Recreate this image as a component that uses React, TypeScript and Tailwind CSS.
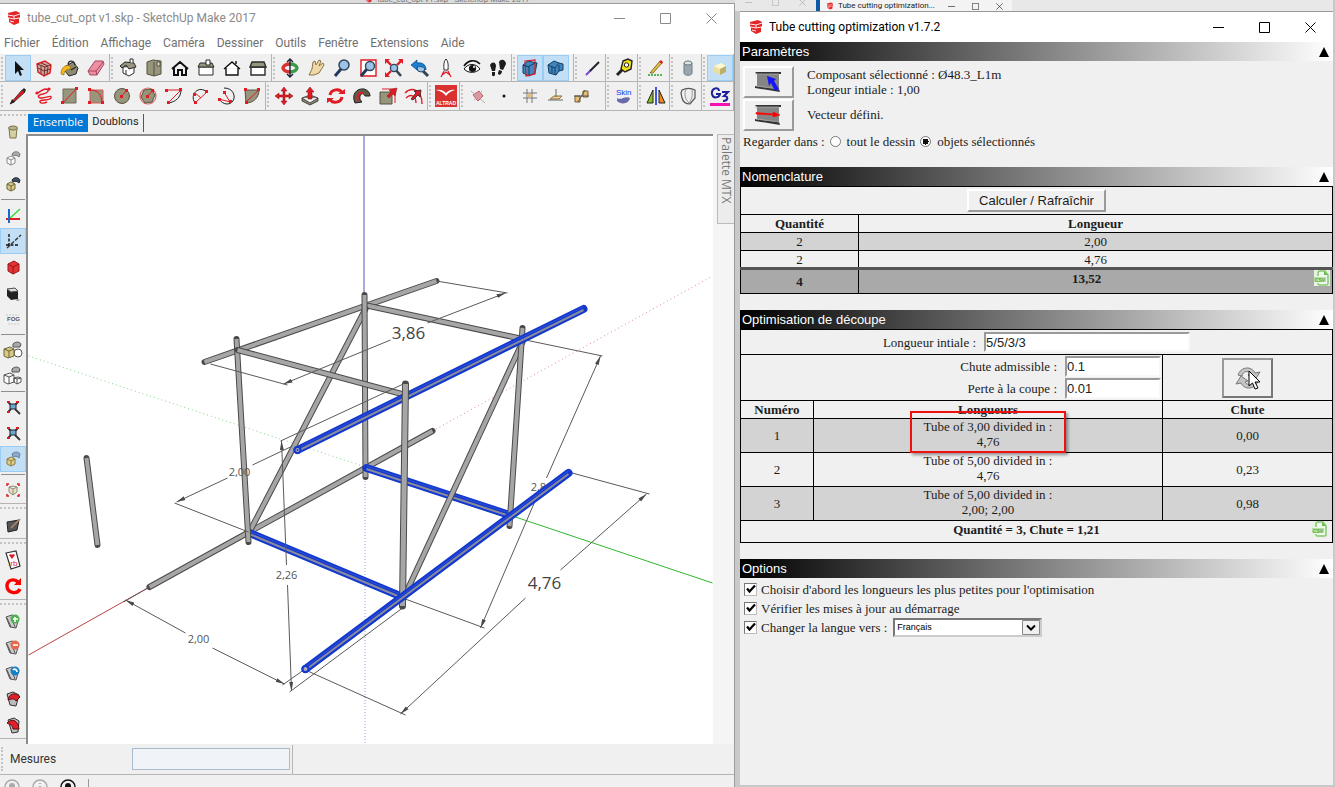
import { useState } from "react";
import type { ReactNode } from "react";

const red = "#e01b24";
const stone = "#97957c";
const dark = "#2b2b2b";

// Every toolbar drawing lives on a 20x20 grid
const icons: Record<string, ReactNode> = {
  select: <path d="M7 3v13l3-3 2 5 2-1-2-5h4z" fill="#111" />,
  component: (
    <>
      <path d="M3 6l8-3 6 4-1 8-6 3-6-4z" fill="#c9a9a0" stroke={red} strokeWidth="1.4" />
      <path d="M3 6l8 3 6-2M11 9l-1 9M7 5l7 3M4 10l6 3 6-2M7 8v8M14 9l-1 7" fill="none" stroke="#7a2a28" strokeWidth="1" />
    </>
  ),
  paint: (
    <>
      <path d="M6 8l7-4 5 6-2 6-7 2-4-5z" fill="#8c8a72" stroke={dark} />
      <path d="M8 6c1-4 6-4 7 1M11 12l5-3" fill="none" stroke={dark} strokeWidth="1.3" />
      <path d="M10 8C5 6 1 10 1 16l3 1c0-4 3-6 7-6z" fill="#f5b81f" stroke="#8a6100" strokeWidth=".6" />
    </>
  ),
  eraser: (
    <>
      <path d="M2 13L9 3h8l1 3-7 11H4z" fill="#ef8fa2" stroke="#a34a5c" />
      <path d="M2 13h8l7-9M10 13l1 4" fill="none" stroke="#a34a5c" />
    </>
  ),
  iso: (
    <>
      <path d="M5 9v6l6 3 5-3V8z" fill="#fff" stroke={dark} />
      <path d="M2 8l5-4 9 1 2 4-7 2-3-4-4 3z" fill={stone} stroke={dark} />
      <path d="M12 4V1h3v4M8 12v4" stroke={dark} fill="#fff" />
    </>
  ),
  top: (
    <>
      <path d="M3 4l6-2 8 1v13l-7 2-7-2z" fill={stone} stroke="#55533f" />
      <path d="M10 4v14M13 4h3v4h-3z" fill="#ddd" stroke="#55533f" />
    </>
  ),
  front: <path d="M2 11l8-7 8 7M4 10v7h4v-5h4v5h4v-7" fill="none" stroke="#111" strokeWidth="2" />,
  right: (
    <>
      <path d="M3 9h14v8H3z" fill="#fff" stroke={dark} />
      <path d="M2 9l2-4h12l2 4z" fill={stone} stroke={dark} />
      <path d="M10 2h4v5h-4z" fill="#fff" stroke={dark} />
    </>
  ),
  back: <path d="M2 11l8-7 8 7M4 10v7h12v-7M14 6V3" fill="#fff" stroke="#111" strokeWidth="1.4" />,
  left: (
    <>
      <path d="M3 9h14v8H3z" fill="#fff" stroke={dark} strokeWidth="1.4" />
      <path d="M2 9l2-5h12l2 5z" fill={stone} stroke={dark} strokeWidth="1.4" />
    </>
  ),
  orbit: (
    <>
      <path d="M10 6c4 0 7 2 7 4s-3 4-7 4" fill="none" stroke="#3b9a4a" strokeWidth="3.4" />
      <path d="M10 14c-4 0-7-2-7-4s3-4 7-4" fill="none" stroke="#d63434" strokeWidth="3.4" />
      <path d="M10 2v16M7 4l3-3 3 3M7 16l3 3 3-3" stroke="#223" fill="none" strokeWidth="1.4" />
    </>
  ),
  pan: <path d="M3 17l3-6 1-7 2-1 1 4 3-5 2 1-2 5 4-3 1 2-5 8-5 2z" fill="#efd9a8" stroke="#8b7445" />,
  zoom: (
    <>
      <path d="M3 18l6-7" stroke="#23395d" strokeWidth="3" />
      <circle cx="12" cy="7" r="5" fill="#9cc4ea" stroke="#345" strokeWidth="1.5" />
    </>
  ),
  zoomWindow: (
    <>
      <path d="M3 2h15v16H3z" fill="#fff" stroke={red} strokeWidth="1.4" />
      <path d="M3 18l6-7" stroke="#23395d" strokeWidth="3" />
      <circle cx="12" cy="8" r="4.5" fill="#9cc4ea" stroke="#345" strokeWidth="1.4" />
    </>
  ),
  extents: (
    <>
      <path d="M11 11l6 7" stroke="#345" strokeWidth="2.6" />
      <path d="M2 2l5 5M18 2l-5 5M2 18l5-5" stroke={red} strokeWidth="2.4" />
      <path d="M1 1h5L1 6zM19 1h-5l5 5zM1 19h5l-5-5z" fill={red} />
      <circle cx="10" cy="10" r="3.6" fill="#9cc4ea" stroke="#345" strokeWidth="1.3" />
    </>
  ),
  previous: (
    <>
      <path d="M12 12l6 6" stroke="#345" strokeWidth="3" />
      <circle cx="11" cy="10" r="4" fill="#9cc4ea" stroke="#345" />
      <path d="M1 7l6-5v3c6-1 9 2 9 7-2-3-5-4-9-3v3z" fill="#1e7fd0" stroke="#0d4c86" strokeWidth=".7" />
    </>
  ),
  camera: (
    <>
      <path d="M10 1c3 3 2 9 2 11H8c0-2-1-8 2-11z" fill="#fff" stroke={dark} />
      <path d="M8 13l-3 6M12 13l3 6M6 17l4-3 4 3" stroke={red} fill="none" strokeWidth="1.2" />
    </>
  ),
  eye: (
    <>
      <path d="M2 11c4-6 12-6 16 0-4 4-11 5-16 0z" fill="#fff" stroke="#111" />
      <path d="M2 8c4-6 11-7 16-2" fill="none" stroke="#111" strokeWidth="1.6" />
      <circle cx="10.500" cy="10.500" r="3.600" fill="#111" />
      <circle cx="12" cy="9" r="1" fill="#fff" />
    </>
  ),
  walk: (
    <path d="M2 7c2-4 6-3 6 1l-1 5H4zM4 14h3v3c-1 2-3 1-3 0zM11 4c2-4 7-2 7 2l-3 6-3-1zM11 12l3 1c0 4-4 5-4 2z" fill="#1c1c1c" />
  ),
  xray: (
    <>
      <path d="M3 7l5-4 9 2-2 10-6 3-6-3z" fill="#3f86bf" stroke="#163d63" />
      <path d="M5 3l10-1v14l-9 2z" fill="none" stroke={red} strokeWidth="1.2" />
      <path d="M8 9l7-4M9 17V9L3 7" stroke="#163d63" fill="none" />
    </>
  ),
  backEdges: (
    <>
      <path d="M2 7l6-4 5 2 4 1v6l-4 1-3 4-7-2z" fill="#3f86bf" stroke="#163d63" />
      <path d="M2 7l7 3v7M9 10l4-5M13 7v6M6 9v6" stroke="#163d63" fill="none" />
    </>
  ),
  edge: (
    <>
      <path d="M4 17l5-5" stroke="#7b45d8" strokeWidth="2" />
      <path d="M8 13l9-9" stroke="#26222e" strokeWidth="2" />
    </>
  ),
  tape: (
    <>
      <path d="M9 11l-6 6" stroke="#222" strokeWidth="3" />
      <path d="M9 3l5-2 4 2-1 8-6 3-4-3z" fill="#f4e11c" stroke="#222" strokeWidth="1.4" />
      <circle cx="12.500" cy="7" r="2.200" fill="#fff" stroke="#222" />
    </>
  ),
  pencilYellow: (
    <>
      <path d="M4 15L14 3l2 2L7 15z" fill="#e6bd3e" stroke="#725614" strokeWidth=".8" />
      <path d="M13 4l2-2 2 2-1 2z" fill={red} />
      <path d="M2 17h14" stroke="#27a127" strokeWidth="1.6" strokeDasharray="2 1" />
    </>
  ),
  cylinder: (
    <>
      <path d="M6 5v10c0 3 8 3 8 0V5z" fill="#9aa6ad" stroke="#6d7a80" />
      <ellipse cx="10" cy="5" rx="4" ry="2" fill="#dbe3e8" stroke="#6d7a80" />
    </>
  ),
  softBox: (
    <>
      <path d="M4 8l7-3 5 3-6 3z" fill="#fff8cf" />
      <path d="M4 8l6 3v6l-6-3z" fill="#eadf9f" />
      <path d="M10 11l6-3v6l-6 3z" fill="#bfae67" />
    </>
  ),
  pencil: (
    <>
      <path d="M2 18L14 4l3 2L6 16z" fill={red} stroke="#222" strokeWidth=".8" />
      <path d="M2 18l2-5 3 3zM14 4l2-2 2 2-1 2z" fill="#222" />
    </>
  ),
  freehand: (
    <>
      <path d="M3 7c4-1 5-4 9-4 4 1 2 4-3 5-6 1-6 4-1 4 6-1 10-3 9 0s-12 1-11 4c1 2 5 1 7 0" fill="none" stroke={red} strokeWidth="1.4" />
      <circle cx="3" cy="7" r="1.600" fill={red} />
      <circle cx="15" cy="3" r="1.600" fill={red} />
    </>
  ),
  rect: (
    <>
      <path d="M3 3h13v14H3z" fill={stone} stroke="#6d6b55" />
      <path d="M3 17L16 3" stroke={red} />
      <path d="M1 15h3v3H1zM15 1h3v3h-3z" fill={red} />
    </>
  ),
  rotRect: (
    <>
      <path d="M4 4h13v13H4z" fill={stone} stroke="#d85a5a" />
      <path d="M4 4c8 0 12 5 12 13" fill="none" stroke={red} />
      <path d="M2 2h3v3H2zM2 15h3v3H2zM15 15h3v3h-3z" fill={red} />
    </>
  ),
  circle: (
    <>
      <circle cx="10" cy="10" r="7.500" fill={stone} stroke="#55533f" />
      <path d="M10 10l4-5" stroke={red} />
      <path d="M8 9h3v3H8zM13 3h3v3h-3z" fill={red} />
    </>
  ),
  polygon: (
    <>
      <circle cx="10" cy="10" r="8" fill="none" stroke="#d66" strokeWidth="1.2" />
      <path d="M6 4l7-1 4 6-3 7-7 1-4-6z" fill={stone} stroke="#55533f" />
      <path d="M10 10l4-5" stroke={red} />
      <path d="M8 9h3v3H8zM13 3h3v3h-3z" fill={red} />
    </>
  ),
  arc: (
    <>
      <path d="M2 4h15L4 17" fill="none" stroke={red} />
      <path d="M17 4c0 7-5 12-13 13" fill="none" stroke="#222" />
      <path d="M1 3h3v3H1zM15 2h3v3h-3zM3 15h3v3H3z" fill={red} />
    </>
  ),
  arc2: (
    <>
      <path d="M17 6L5 17M5 7l6 5" fill="none" stroke={red} />
      <path d="M5 17C-1 8 9-1 17 6" fill="none" stroke="#222" />
      <path d="M3 7h3v3H3zM15 4h3v3h-3zM4 15h3v3H4z" fill={red} />
    </>
  ),
  arc3: (
    <>
      <path d="M8 2c13 0 13 16 3 16-3 0-6-2-8-5" fill="none" stroke="#222" />
      <path d="M3 13l11 3L8 6" fill="none" stroke={red} />
      <path d="M2 12h3v3H2zM7 5h3v3H7zM13 14h3v3h-3z" fill={red} />
    </>
  ),
  pie: (
    <>
      <path d="M3 4h14c0 7-5 13-13 13z" fill={stone} stroke="#55533f" />
      <path d="M4 16L17 4" stroke={red} />
      <path d="M2 2h3v3H2zM15 2h3v3h-3zM3 15h3v3H3z" fill={red} />
    </>
  ),
  move: <path d="M10 1l3 4h-2v4h4V7l4 3-4 3v-2h-4v4h2l-3 4-3-4h2v-4H5v2l-4-3 4-3v2h4V5H7z" fill={red} stroke="#7d1015" strokeWidth=".5" />,
  pushpull: (
    <>
      <path d="M2 12l8-3 8 3-8 5zM2 12v3l8 4 8-4v-3" fill="#8a8870" stroke={dark} strokeWidth=".8" />
      <path d="M8 13V6H6l4-5 4 5h-2v7z" fill={red} stroke="#7d1015" strokeWidth=".5" />
    </>
  ),
  rotate: (
    <>
      <path d="M4 9c1-6 10-7 12-2" fill="none" stroke={red} strokeWidth="3" />
      <path d="M16 11c-1 6-10 7-12 2" fill="none" stroke={red} strokeWidth="3" />
      <path d="M12 8h7V3zM8 12H1v5z" fill={red} />
    </>
  ),
  follow: (
    <>
      <path d="M3 17C-1 8 5 2 12 3c4 1 6 4 6 7h-5c-1-3-4-3-5 0-1 3 1 5 2 6z" fill="#5e5c4b" stroke="#1f1f1f" />
      <path d="M6 15c-2-6 1-9 6-8" fill="none" stroke={red} strokeWidth="2" />
    </>
  ),
  scale: (
    <>
      <path d="M4 3h13v14" fill="none" stroke={red} />
      <path d="M2 6h12v12H2z" fill={stone} stroke="#55533f" />
      <path d="M9 10l4-4-2-2 8-2-2 8-2-2-4 4z" fill={red} stroke="#7d1015" strokeWidth=".5" />
    </>
  ),
  offset: (
    <>
      <path d="M1 7c7-7 17-3 17 11M2 12c5-5 10-2 10 5" fill="none" stroke={red} strokeWidth="1.4" />
      <path d="M7 13l5-6-2-2 7-1-1 7-2-2-5 5z" fill={red} stroke="#222" strokeWidth=".8" />
    </>
  ),
  softEraser: (
    <>
      <path d="M5 9l6-4 4 5-5 5z" fill="#e9919d" stroke="#b26570" />
      <path d="M3 5l14 12M14 5L6 14" stroke="#b8a9aa" />
    </>
  ),
  dot: <circle cx="10" cy="10" r="1.500" fill="#111" />,
  grid: (
    <>
      <path d="M3 7h14M3 12h14M7 3v14M12 3v14" stroke="#777" />
      <path d="M7 8h5v3H7z" fill="#e8bd72" />
    </>
  ),
  plane: (
    <>
      <path d="M4 13l4-3h8l-3 3z" fill="#f1cf92" stroke="#8d7443" />
      <path d="M10 3v8M2 14h15" stroke="#666" />
    </>
  ),
  joints: (
    <>
      <path d="M3 10h5v6H3zM11 5h5v6h-5z" fill="#e8bd72" stroke="#776035" />
      <path d="M2 10h15M6 16l7-12" stroke="#555" fill="none" />
    </>
  ),
  skin: (
    <>
      <path d="M3 12c4 3 8-3 13 0-1 6-9 7-13 3z" fill="#686aa9" />
      <text x="2" y="9" fontSize="8" fill="#1633e8" fontFamily="Liberation Sans, sans-serif">Skin</text>
    </>
  ),
  mirror: (
    <>
      <path d="M7 4v13H1z" fill="#8cc21d" stroke="#222" />
      <path d="M13 4v13h6z" fill="#f08a1c" stroke="#222" />
      <path d="M10 1v18" stroke="#1731e8" strokeWidth="1.6" />
    </>
  ),
  shield: (
    <>
      <path d="M4 4c4-2 9-2 13 0v8l-5 6c-4 0-7-2-8-6l-1-5z" fill="#eee" stroke="#555" strokeWidth="1.2" />
      <path d="M8 3c-2 5-1 10 3 14M14 4c1 6-1 11-3 13" fill="none" stroke="#999" />
    </>
  ),
  cz: (
    <>
      <path d="M9 5C9 0 1 2 2 8c1 5 7 4 8 0H6M12 6h6l-4 4c5 0 4 5-1 5" fill="none" stroke="#1c2199" strokeWidth="2" />
      <path d="M0 17h20v3H0z" fill="#f312b4" />
    </>
  ),
  bin: (
    <>
      <path d="M6 6l1 10h6l1-10z" fill="#d6d0a0" stroke="#77734e" />
      <ellipse cx="10" cy="6" rx="4.500" ry="2" fill="#b9b486" stroke="#77734e" />
    </>
  ),
  cubeWire: (
    <>
      <path d="M4 10l4-2 4 2v5l-4 2-4-2zM4 10l4 2 4-2M8 12v5" fill="#fff" stroke="#888" />
      <path d="M9 6c3-4 7-2 8 0l-1 3c-2-2-4-2-6-1z" fill="#aaa" stroke="#777" />
    </>
  ),
  cubeSolid: (
    <>
      <path d="M4 10l4-2 4 2v5l-4 2-4-2z" fill="#d8ca85" stroke="#6c643d" />
      <path d="M4 10l4 2 4-2M8 12v5" fill="none" stroke="#6c643d" />
      <path d="M9 6c3-4 7-2 8 0l-1 3c-2-2-4-2-6-1z" fill="#3d4e66" stroke="#222" />
    </>
  ),
  cubeGlass: (
    <>
      <path d="M4 10l4-2 4 2v5l-4 2-4-2z" fill="#e0cd83" stroke="#8b7d49" />
      <path d="M4 10l4 2 4-2M8 12v5" fill="none" stroke="#8b7d49" />
      <path d="M9 5c3-3 7-2 8 0l-1 4c-2-2-4-2-6-1z" fill="#8fa9cb" stroke="#69809f" />
    </>
  ),
  axes: (
    <>
      <path d="M6 14L17 4" stroke="#38e038" strokeWidth="1.6" />
      <path d="M3 14h14" stroke={red} strokeWidth="2" />
      <path d="M6 4v14" stroke="#1b67d0" strokeWidth="2" />
    </>
  ),
  guides: (
    <>
      <path d="M6 3v13M3 14h13" stroke="#111" strokeWidth="1.4" strokeDasharray="3 1.500" />
      <path d="M4 17L18 4" stroke="#333" strokeWidth="1.4" strokeDasharray="4 1.500" />
    </>
  ),
  redBox: (
    <>
      <path d="M5 7l6-3 5 3v7l-6 3-5-3z" fill="#ea3232" stroke="#8d1b1b" />
      <path d="M5 7l5 3 6-3M10 10v7" fill="none" stroke="#8d1b1b" />
    </>
  ),
  blackBox: (
    <>
      <path d="M4 6l8-1 3 3v8l-7 1-4-4z" fill="#222" />
      <path d="M4 6l8-1 3 3-7 1z" fill="#ddd" stroke="#555" />
      <path d="M14 16l4 1-5 1z" fill="#888" />
    </>
  ),
  fog: (
    <>
      <path d="M3 6h13M5 15h12" stroke="#ddd" strokeWidth="2" strokeDasharray="2 1" />
      <text x="4" y="12" fontSize="6" fontWeight="bold" fill="#555" fontFamily="Liberation Sans, sans-serif">FOG</text>
    </>
  ),
  ghostSolid: (
    <>
      <path d="M10 4c3-3 7-2 8 0l-1 3H10z" fill="#aaa" stroke="#555" />
      <circle cx="15" cy="13" r="4" fill="#fff" stroke="#555" />
      <path d="M1 9l6-2 4 2v7l-6 2-4-2z" fill="#d8ca85" stroke="#6c643d" />
      <path d="M1 9l5 2 5-2M6 11v7" fill="none" stroke="#6c643d" />
    </>
  ),
  ghostWire: (
    <>
      <path d="M9 3c3-3 7-2 8 0l-1 3H9z" fill="#aaa" stroke="#555" />
      <path d="M1 9l6-2 4 2v7l-6 2-4-2zM1 9l5 2 5-2M6 11v7M11 12l4-1 3 1v4l-4 2-3-2zM11 12l3 1 4-1M14 13v5" fill="#fff" stroke="#555" />
    </>
  ),
  focus: (
    <>
      <path d="M5 5l3 3M15 5l-3 3M5 15l3-3M12 12l5 5" stroke="#333" strokeWidth="1.8" />
      <path d="M4 4h3v2H4zM13 4h3v2h-3zM4 14h3v2H4z" fill={red} />
      <path d="M7 7h6v5H7z" fill="#6fa6cc" stroke="#223" />
    </>
  ),
  bounds: (
    <>
      <path d="M4 6V4h2M14 4h2v2M4 14v2h2M16 14v2h-2" fill="none" stroke={red} strokeWidth="1.5" />
      <path d="M6 7l4-1 4 1v5l-4 3-4-3zM6 7l4 2 4-2M10 9v6" fill="#e9e2c8" stroke="#8f8a74" />
    </>
  ),
  board: (
    <>
      <path d="M4 7l12-2-2 10-9 2z" fill="#555" stroke="#222" />
      <path d="M8 13l9-9" stroke="#b08a68" strokeWidth="1.6" />
    </>
  ),
  ruby: (
    <>
      <path d="M3 3l10-2 4 15-9 3z" fill="#fff" stroke="#333" strokeWidth="1.2" />
      <path d="M6 5l2-1 1 1 1-1 2 1-3 4z" fill={red} />
      <text x="5" y="16" fontSize="8" fill={red} fontFamily="Liberation Sans, sans-serif">.rb</text>
    </>
  ),
  reload: (
    <>
      <path d="M17 13c-3 6-13 4-13-3 0-6 7-8 11-4" fill="none" stroke="#f00" strokeWidth="3.400" />
      <path d="M18 2v7h-7z" fill="#f00" />
    </>
  ),
};

function badge(fill: string, mark: string) {
  return (
    <>
      <path d="M3 6l6-2 7 3-3 10-6-1z" fill="#ccc" stroke="#555" />
      <path d="M4 7l4 9M8 6l4 10" stroke="#555" />
      <circle cx="12" cy="8" r="4.500" fill={fill} />
      <path d={mark} stroke="#fff" strokeWidth="1.600" fill="none" />
    </>
  );
}

icons.tagAdd = badge("#4fb054", "M10 8h5M12 6v5");
icons.tagRemove = badge("#e5684f", "M10 8h5");
icons.tagSync = badge("#1781c4", "M10 7c2-2 4 0 4 2");
icons.tagUp = (
  <>
    <path d="M4 5l6-2 6 3-3 11-6-1z" fill="#bbb" stroke="#333" />
    <path d="M5 11c1-7 8-8 12-3l-4 4c-2-3-4-2-8-1z" fill="#e0202a" stroke="#5a0d10" />
  </>
);
icons.tagDown = (
  <>
    <path d="M5 5l6-2 5 3-1 11-6 1z" fill="#bbb" stroke="#333" />
    <path d="M4 8c5-5 11-3 12 6h-6c0-3-2-4-6-6z" fill="#e0202a" stroke="#5a0d10" />
  </>
);

function Icon({ name, className = "size-5" }: { name: string; className?: string }) {
  return (
    <svg viewBox="0 0 20 20" className={className} aria-hidden="true">
      {icons[name]}
    </svg>
  );
}

function Logo({ className = "size-4" }: { className?: string }) {
  return (
    <svg viewBox="0 0 16 16" className={className} aria-hidden="true">
      <path d="M2 3l8-2 4 2v4l-1 1v5l-5 2-5-3v-4L2 7z" fill="#e42527" />
      <path d="M2 5l6 1 6-2M8 6v3L3 8M8 9l5-1M4 11l4 1" fill="none" stroke="#fff" strokeWidth=".9" />
    </svg>
  );
}

function WindowButtons({ className, glyph = "size-[11px]" }: { className: string; glyph?: string }) {
  return (
    <div className={`flex items-center ${className}`}>
      <button type="button" aria-label="Réduire" className="flex flex-1 justify-center">
        <svg viewBox="0 0 11 11" className={glyph}><path d="M0 5.500h11" stroke="currentColor" /></svg>
      </button>
      <button type="button" aria-label="Agrandir" className="flex flex-1 justify-center">
        <svg viewBox="0 0 11 11" className={glyph}><path d="M.5.5h10v10H.5z" fill="none" stroke="currentColor" /></svg>
      </button>
      <button type="button" aria-label="Fermer" className="flex flex-1 justify-center">
        <svg viewBox="0 0 11 11" className={glyph}><path d="M.5.5l10 10M10.500.5l-10 10" stroke="currentColor" /></svg>
      </button>
    </div>
  );
}

interface ToolGroupProps {
  items: string[];
  active?: string[];
  grow?: boolean;
}

function ToolGroup({ items, active = [], grow }: ToolGroupProps) {
  return (
    <div className={`flex items-center border-r border-[#b5b5b5] ${grow ? "flex-1" : "shrink-0"}`}>
      <div className="mx-px h-[22px] w-[3px] border-l-2 border-dotted border-[#c4c4c4]" />
      {items.map((name) => (
        <button
          key={name}
          type="button"
          aria-label={name}
          className={
            active.includes(name)
              ? "flex h-[26px] w-[26px] shrink-0 items-center justify-center border border-[#99cdf5] bg-[#c2dff5]"
              : "flex h-[26px] w-[26px] shrink-0 items-center justify-center"
          }
        >
          {name === "altrad" ? (
            <svg viewBox="0 0 22 22" className="size-[22px]" aria-hidden="true">
              <path d="M0 0h22v22H0z" fill="#d93030" />
              <path d="M1 5c5-1 8 1 10 3 2-2 5-4 9-3-4 1-7 3-9 6-2-3-5-5-10-6z" fill="#fff" />
              <text x="11" y="20" fontSize="5" textAnchor="middle" fontWeight="bold" fill="#fff" fontFamily="Liberation Sans, sans-serif">ALTRAD</text>
            </svg>
          ) : (
            <Icon name={name} />
          )}
        </button>
      ))}
    </div>
  );
}

function SideTools({ items, active }: { items: string[]; active?: string }) {
  return (
    <>
      {items.map((name, i) => (
        <button
          key={i}
          type="button"
          aria-label={name}
          className={
            name === active
              ? "flex h-[26px] w-full shrink-0 items-center justify-center border border-[#99cdf5] bg-[#c2dff5]"
              : "flex h-[26px] w-full shrink-0 items-center justify-center"
          }
        >
          <Icon name={name} />
        </button>
      ))}
    </>
  );
}

const SideGrip = () => (
  <div className="flex h-2 shrink-0 items-center">
    <div className="w-full border-t-2 border-dotted border-[#c4c4c4]" />
  </div>
);
const SideLine = () => (
  <div className="flex h-[5px] shrink-0 items-center px-px">
    <div className="w-full border-t border-[#8f8f8f]" />
  </div>
);

type Line = [number, number, number, number];

function Tube({ l, w = 6 }: { l: Line; w?: number }) {
  const [x1, y1, x2, y2] = l;
  return (
    <g>
      <line x1={x1} y1={y1} x2={x2} y2={y2} stroke="#4a4a4a" strokeWidth={w} strokeLinecap="round" />
      <line x1={x1} y1={y1} x2={x2} y2={y2} stroke="#a6a6a6" strokeWidth={w - 2} />
    </g>
  );
}

function SelectedTube({ l }: { l: Line }) {
  const [x1, y1, x2, y2] = l;
  return (
    <g>
      <line x1={x1} y1={y1} x2={x2} y2={y2} stroke="#1238d0" strokeWidth="8" strokeLinecap="round" />
      <line x1={x1} y1={y1 + 1} x2={x2} y2={y2 + 1} stroke="#8a8c9c" strokeWidth="2" />
      <line x1={x1} y1={y1 - 2} x2={x2} y2={y2 - 2} stroke="#3c5ad4" strokeWidth=".7" />
    </g>
  );
}

const backTubes: Line[] = [
  [86, 458, 97, 545],
  [149, 587, 432, 431],
  [204, 362, 436, 281],
  [364, 305, 522, 339],
  [365, 309, 250, 530],
  [364, 295, 365, 477],
];
const frontTubes: Line[] = [
  [236, 339, 248, 542],
  [237, 350, 405, 395],
  [522, 342, 405, 594],
  [522, 328, 509, 526],
];

const extensionLines: Line[] = [
  [210, 364, 287, 385],
  [436, 281, 507, 293],
  [525, 340, 602, 356],
  [402, 598, 484, 628],
  [568, 472, 649, 494],
  [305, 670, 405, 715],
  [174, 503, 248, 532],
  [280, 441, 405, 383],
  [289, 692, 402, 608],
  [149, 587, 123, 602],
  [282, 685, 402, 600],
];

// each half of a dimension runs from the label towards its arrow
const dimensionLines: Line[] = [
  [390, 340, 283, 384],
  [427, 323, 505, 293],
  [546, 478, 600, 356],
  [535, 500, 480, 628],
  [560, 570, 646, 494],
  [525, 598, 400, 714],
  [227, 478, 176, 502],
  [286, 565, 281, 441],
  [287, 585, 291, 691],
  [185, 633, 125, 600],
  [212, 648, 284, 684],
];

function Scene() {
  return (
    <svg viewBox="28 136 684 608" className="h-full w-full font-['Open_Sans',sans-serif]" role="img" aria-label="Modèle">
      <defs>
        <marker id="arrow" viewBox="0 0 9 6" refX="9" refY="3" markerWidth="9" markerHeight="6" orient="auto">
          <path d="M0 1l9 2-9 2z" fill="#4a4a4a" />
        </marker>
      </defs>
      <g fill="none">
        <path d="M363.500 136v158" stroke="#5552b5" />
        <path d="M364.500 478v266" stroke="#9a97dd" strokeDasharray="1 2" />
        <path d="M28 356l337 111" stroke="#7fd67f" strokeDasharray="1 3" />
        <path d="M509 515l203 68" stroke="#2fb52f" />
        <path d="M28 655l121-68" stroke="#b94444" />
        <path d="M432 431l280-155" stroke="#dd8d8d" strokeDasharray="1 3" />
      </g>
      {backTubes.map((l, i) => <Tube key={i} l={l} />)}
      <line x1="252" y1="465" x2="292" y2="446" stroke="#5a5a5a" />
      <SelectedTube l={[366, 468, 509, 515]} />
      <SelectedTube l={[249, 533, 402, 597]} />
      {frontTubes.map((l, i) => <Tube key={i} l={l} />)}
      {extensionLines.map((l, i) => (
        <line key={i} x1={l[0]} y1={l[1]} x2={l[2]} y2={l[3]} stroke="#5a5a5a" />
      ))}
      {dimensionLines.map((l, i) => (
        <line key={i} x1={l[0]} y1={l[1]} x2={l[2]} y2={l[3]} stroke="#5a5a5a" markerEnd="url(#arrow)" />
      ))}
      <g fontSize="11" fill="#555" textAnchor="middle">
        <text x="239" y="476">2,00</text>
        <text x="541" y="491">2,80</text>
        <text x="286" y="579">2,26</text>
        <text x="198" y="643">2,00</text>
      </g>
      <SelectedTube l={[297, 450, 583, 309]} />
      <Tube l={[405, 384, 402, 606]} w={7} />
      <SelectedTube l={[305, 669, 568, 473]} />
      <circle cx="297" cy="450" r="3" fill="#aab" stroke="#1238d0" strokeWidth="2" />
      <circle cx="297" cy="450" r="1" fill="#1238d0" />
      <circle cx="305" cy="669" r="3" fill="#aab" stroke="#1238d0" strokeWidth="2" />
      <g fontSize="17" fill="#444" textAnchor="middle">
        <text x="408" y="339">3,86</text>
        <text x="544" y="589">4,76</text>
      </g>
    </svg>
  );
}

const menus = ["Fichier", "Édition", "Affichage", "Caméra", "Dessiner", "Outils", "Fenêtre", "Extensions", "Aide"];

function SketchUpWindow() {
  return (
    <div className="flex min-h-0 min-w-0 flex-col bg-[#dcdcdc]">
      <div className="flex h-[3px] shrink-0 items-end justify-center gap-1 overflow-hidden pl-40 text-[8px] leading-[6px] text-[#777]">
        <Logo className="size-2" />
        tube_cut_opt v1.skp - SketchUp Make 2017
      </div>
      <main className="flex min-h-0 flex-1 flex-col overflow-hidden border-t border-r border-[#9c9c9c] bg-[#f0f0f0]">
        <header className="flex h-7 shrink-0 items-center bg-white pl-1.5 text-[12px] text-[#8a8a8a]">
          <Logo />
          <h1 className="ml-[5px] flex-1 truncate">tube_cut_opt v1.skp - SketchUp Make 2017</h1>
          <WindowButtons className="w-[138px]" />
        </header>
        <nav className="flex h-[22px] shrink-0 items-center gap-3 bg-white pl-1 text-[12px] text-[#6f6f6f]">
          {menus.map((m) => (
            <button key={m} type="button">{m}</button>
          ))}
        </nav>

        <div className="flex h-7 shrink-0 overflow-hidden border-b border-[#b5b5b5]">
          <ToolGroup items={["select", "component", "paint", "eraser"]} active={["select"]} />
          <ToolGroup items={["iso", "top", "front", "right", "back", "left"]} />
          <ToolGroup items={["orbit", "pan", "zoom", "zoomWindow", "extents", "previous", "camera", "eye", "walk"]} />
          <ToolGroup items={["xray", "backEdges"]} active={["xray", "backEdges"]} grow />
          <ToolGroup items={["edge"]} />
          <ToolGroup items={["tape"]} />
          <ToolGroup items={["pencilYellow"]} />
          <ToolGroup items={["cylinder"]} />
          <ToolGroup items={["softBox"]} active={["softBox"]} />
        </div>
        <div className="flex h-[29px] shrink-0 overflow-hidden border-b border-[#b5b5b5]">
          <ToolGroup items={["pencil", "freehand", "rect", "rotRect", "circle", "polygon", "arc", "arc2", "arc3", "pie"]} />
          <ToolGroup items={["move", "pushpull", "rotate", "follow", "scale", "offset"]} />
          <ToolGroup items={["altrad"]} />
          <ToolGroup items={["softEraser", "dot", "grid", "plane", "joints"]} grow />
          <ToolGroup items={["skin"]} />
          <ToolGroup items={["mirror"]} />
          <ToolGroup items={["shield"]} />
          <ToolGroup items={["cz"]} />
        </div>

        <div className="flex min-h-0 flex-1">
          <aside className="flex w-[26px] shrink-0 flex-col overflow-hidden">
            <SideGrip />
            <SideTools items={["bin", "cubeWire", "cubeSolid"]} />
            <SideLine />
            <SideTools items={["axes", "guides", "redBox", "blackBox", "fog"]} active="guides" />
            <SideLine />
            <SideTools items={["ghostSolid", "ghostWire"]} />
            <SideLine />
            <SideTools items={["focus", "focus", "cubeGlass"]} active="cubeGlass" />
            <SideLine />
            <SideTools items={["bounds"]} />
            <div className="border-b border-[#b5b5b5]" />
            <SideGrip />
            <SideTools items={["board"]} />
            <div className="border-b border-[#b5b5b5]" />
            <SideGrip />
            <SideTools items={["ruby", "reload"]} />
            <div className="border-b border-[#b5b5b5]" />
            <SideGrip />
            <SideTools items={["tagAdd", "tagRemove", "tagSync", "tagUp", "tagDown"]} />
            <div className="border-b border-[#b5b5b5]" />
          </aside>
          <div className="flex min-w-0 flex-1 flex-col">
            <div className="flex h-[23px] shrink-0 items-center pl-0.5 text-[11px]">
              <button type="button" className="h-[18px] bg-[#0078d7] px-[5px] font-['Open_Sans',sans-serif] text-white">Ensemble</button>
              <button type="button" className="h-[18px] border-r border-[#555] px-1 text-[#222]">Doublons</button>
            </div>
            <div className="flex min-h-0 flex-1">
              <div className="min-w-0 flex-1 border-t-2 border-l-2 border-[#8c8c8c] bg-white">
                <Scene />
              </div>
              <div className="w-[21px] shrink-0 bg-[#f5f5f5] pl-1">
                <button type="button" className="h-[90px] w-full border border-r-0 border-[#bbb] bg-[#ececec] pt-0.5 text-left font-['Open_Sans',sans-serif] text-[12px] leading-[16px] text-[#777] [writing-mode:vertical-rl]">
                  Palette MTX
                </button>
              </div>
            </div>
          </div>
        </div>

        <div className="flex h-[31px] shrink-0 items-center border-b border-[#b5b5b5]">
          <div className="flex h-[29px] items-center border-r border-[#b5b5b5] pr-0.5">
            <div className="mx-px h-6 w-2 border-l-2 border-dotted border-[#c4c4c4]" />
            <label htmlFor="mesures" className="w-[122px] text-[12px] text-[#333]">Mesures</label>
            <input id="mesures" className="h-[22px] w-[158px] border border-[#a9bccd] bg-[#f0f3f7] px-1 text-[12px]" />
          </div>
        </div>
        <footer className="flex h-[12px] shrink-0 gap-3 overflow-hidden pl-1 pt-1">
          {["#aaa", "#aaa", "#111"].map((c, i) => (
            <svg key={i} viewBox="0 0 16 16" className="size-4 shrink-0" aria-hidden="true">
              <circle cx="8" cy="8" r="7" fill="none" stroke={c} strokeWidth="1.500" />
              {i === 1 ? <path d="M8 4v1M8 7v6" stroke={c} strokeWidth="2" /> : <path d="M5 7a3 3 0 016 0v3H5z" fill={c} />}
            </svg>
          ))}
          <div className="h-4 shrink-0 border-l border-[#999]" />
        </footer>
      </main>
    </div>
  );
}

function Section({ title, children }: { title: string; children: ReactNode }) {
  const [open, setOpen] = useState(true);
  return (
    <section className="mb-4">
      <h2>
        <button
          type="button"
          onClick={() => setOpen(!open)}
          className="flex h-[19px] w-full items-center justify-between bg-[linear-gradient(to_right,#000,#fff)] pr-1 pl-0.5 font-['Liberation_Sans',Arial,sans-serif] text-[13px] text-white"
        >
          {title}
          <svg viewBox="0 0 10 10" className="size-[10px]" aria-hidden="true">
            <path d={open ? "M5 0l5 10H0z" : "M0 0h10L5 10z"} fill="#000" />
          </svg>
        </button>
      </h2>
      {open && children}
    </section>
  );
}

function Beam({ children }: { children: ReactNode }) {
  return (
    <svg viewBox="0 0 30 24" className="h-6 w-[30px]" aria-hidden="true">
      <path d="M3 3h22v17L3 16z" fill="#858585" />
      <path d="M1 2h26v2H3zM1 16l24 3 1 3L1 18z" fill="#333" />
      <path d="M1 4h24M2 16l23 3" stroke="#aaa" strokeWidth=".8" />
      {children}
    </svg>
  );
}

function CsvButton({ label }: { label: string }) {
  return (
    <button type="button" aria-label={label} className="flex size-4 justify-center bg-[#e9f3e5]">
      <svg viewBox="0 0 16 16" className="size-4" aria-hidden="true">
        <path d="M4 6V3c0-1 1-2 2-2h5l3 4v9c0 1-1 1-2 1H5c-1 0-1-1-1-2" fill="#eef8ea" stroke="#85c66e" strokeWidth="1.500" />
        <path d="M10 1l4 4h-4z" fill="#6fb955" />
        <path d="M0 7h12v5H0z" fill="#b5e0a5" />
        <text x="6" y="11.500" fontSize="5" fontWeight="bold" textAnchor="middle" fill="#5fa848" fontFamily="Liberation Sans, sans-serif">CSV</text>
      </svg>
    </button>
  );
}

function CheckRow({ id, label, children }: { id: string; label: string; children?: ReactNode }) {
  return (
    <div className="flex h-[19px] items-center">
      <span className="grid size-[13px]">
        <input
          id={id}
          type="checkbox"
          defaultChecked
          className="peer col-start-1 row-start-1 size-[13px] appearance-none border border-t-[#777] border-r-[#bbb] border-b-[#bbb] border-l-[#777] bg-white"
        />
        <svg viewBox="0 0 13 13" className="pointer-events-none invisible col-start-1 row-start-1 size-[13px] peer-checked:visible" aria-hidden="true">
          <path d="M3 5.500l2.500 3L11 2.500" fill="none" stroke="#000" strokeWidth="2.200" />
        </svg>
      </span>
      <label htmlFor={id} className="ml-1">{label}</label>
      {children}
    </div>
  );
}

const raised = "border-2 border-t-white border-r-[#9a9a9a] border-b-[#9a9a9a] border-l-white bg-[#f0f0f0]";
const sunken =
  "border-2 border-t-[#9a9a9a] border-r-[#f8f8f8] border-b-[#f8f8f8] border-l-[#9a9a9a] bg-white font-['Liberation_Sans',Arial,sans-serif] text-[13px] text-[#222]";
const radio =
  "size-[11px] appearance-none rounded-full border border-[#777] bg-white checked:bg-[radial-gradient(circle,#111_0_3px,#fff_3px)]";

const parts = [
  { qty: "2", length: "2,00" },
  { qty: "2", length: "4,76" },
];

const cuts = [
  { n: "1", tube: "Tube of 3,00 divided in :", pieces: "4,76", waste: "0,00" },
  { n: "2", tube: "Tube of 5,00 divided in :", pieces: "4,76", waste: "0,23" },
  { n: "3", tube: "Tube of 5,00 divided in :", pieces: "2,00; 2,00", waste: "0,98" },
];

function CuttingDialog() {
  return (
    <div className="flex min-h-0 min-w-0 flex-col bg-[#c9c9c9] pr-[2px] pb-[2px]">
      {/* Windows lying behind the dialog */}
      <div className="flex h-[11px] shrink-0 overflow-hidden bg-[#e8e8e8]">
        <div className="w-[81px] shrink-0 text-[#aaa]">
          <WindowButtons className="h-1 w-full" glyph="size-[7px]" />
        </div>
        <div className="flex h-3 w-[196px] shrink-0 items-center gap-1 border-l-4 border-[#0c59a4] bg-[#f3f3f3] pl-1.5 text-[8px] whitespace-nowrap text-[#222]">
          <Logo className="size-2" />
          Tube cutting optimization...
          <WindowButtons className="h-2 flex-1" glyph="size-[7px]" />
        </div>
      </div>

      <aside className="ml-[5px] min-h-0 flex-1 overflow-hidden border-t border-[#999] bg-[#f0f0f0] font-['Liberation_Serif','Times_New_Roman',serif] text-[13px] leading-[15px] text-[#1c1c1c]">
        <header className="flex h-[30px] items-center bg-white pl-2 font-['Roboto',sans-serif] text-[12px] text-black">
          <Logo />
          <h1 className="ml-[5px] flex-1 truncate">Tube cutting optimization v1.7.2</h1>
          <WindowButtons className="w-[138px]" />
        </header>

        <Section title="Paramètres">
          <div className="px-[3px] pt-1">
            <div className="flex h-[33px] items-center gap-[13px]">
              <button type="button" aria-label="Sélectionner un composant" className={`flex h-8 w-[51px] items-center justify-center ${raised}`}>
                <Beam><path d="M13 6l9 3-2 2 5 8-4 2-4-8-2 3z" fill="#1414ff" /></Beam>
              </button>
              <p>
                Composant sélectionné : Ø48.3_L1m
                <br />
                Longeur intiale : 1,00
              </p>
            </div>
            <div className="flex h-[33px] items-center gap-[13px]">
              <button type="button" aria-label="Définir un vecteur" className={`flex h-8 w-[51px] items-center justify-center ${raised}`}>
                <Beam><path d="M2 9.500l17 1.500V9l7 3-7 2v-2L2 11z" fill="#f00" stroke="#f00" strokeWidth=".6" /></Beam>
              </button>
              <p>Vecteur défini.</p>
            </div>
            <div className="flex h-5 items-center" role="radiogroup">
              <span className="mr-[5px]">Regarder dans :</span>
              <input id="all" type="radio" name="scope" className={radio} />
              <label htmlFor="all" className="mr-[5px] ml-1.5">tout le dessin</label>
              <input id="selected" type="radio" name="scope" defaultChecked className={radio} />
              <label htmlFor="selected" className="ml-1.5">objets sélectionnés</label>
            </div>
          </div>
        </Section>

        <Section title="Nomenclature">
          <div className="flex h-7 items-center justify-center border-x border-t border-black">
            <button type="button" className={`h-[23px] px-2.5 font-['Liberation_Sans',Arial,sans-serif] text-[13px] ${raised}`}>
              Calculer / Rafraîchir
            </button>
          </div>
          <table className="w-full border-collapse border border-black text-center">
            <thead>
              <tr className="h-[18px]">
                <th className="w-[118px] border border-black">Quantité</th>
                <th className="border border-black">Longueur</th>
              </tr>
            </thead>
            <tbody>
              {parts.map((p) => (
                <tr key={p.length} className="h-[18px] odd:bg-[#d3d3d3]">
                  <td className="border border-black">{p.qty}</td>
                  <td className="border border-black">{p.length}</td>
                </tr>
              ))}
            </tbody>
            <tfoot>
              <tr className="h-[25px] bg-[#a9a9a9] font-bold">
                <td className="border border-t-[3px] border-black border-t-[#555]">4</td>
                <td className="border border-t-[3px] border-black border-t-[#555] pr-0.5 align-top">
                  <div className="flex items-center">
                    <span className="flex-1">13,52</span>
                    <CsvButton label="Exporter la nomenclature" />
                  </div>
                </td>
              </tr>
            </tfoot>
          </table>
        </Section>

        <Section title="Optimisation de découpe">
          <div className="flex h-[25px] items-center justify-center gap-2 border-x border-t border-black">
            <label htmlFor="lengths">Longueur intiale :</label>
            <input id="lengths" defaultValue="5/5/3/3" className={`h-5 w-[206px] ${sunken}`} />
          </div>
          <div className="flex border-x border-t border-black">
            <div className="flex flex-1 flex-col items-end gap-px border-r border-black py-px pr-px">
              <div className="flex items-center gap-2">
                <label htmlFor="waste">Chute admissible :</label>
                <input id="waste" defaultValue="0.1" className={`h-[21px] w-24 ${sunken}`} />
              </div>
              <div className="flex items-center gap-2">
                <label htmlFor="kerf">Perte à la coupe :</label>
                <input id="kerf" defaultValue="0.01" className={`h-[21px] w-24 ${sunken}`} />
              </div>
            </div>
            <div className="flex w-[169px] items-center justify-center">
              <button type="button" aria-label="Optimiser" className="relative flex h-10 w-[51px] items-center justify-center border-2 border-[#777] border-t-[#999] border-l-[#999] bg-[#f0f0f0]">
                <svg viewBox="0 0 26 26" className="size-[26px]" aria-hidden="true">
                  <path d="M3 10C6 1 17 1 20 8l5-1-5 8-7-5 3-1c-3-4-8-3-9 2z" fill="#c4c4c4" stroke="#777" />
                  <path d="M23 16c-3 9-14 9-17 2l-5 1 5-8 7 5-3 1c3 4 8 3 9-2z" fill="#c4c4c4" stroke="#777" />
                </svg>
                <svg viewBox="0 0 13 20" className="absolute top-2.5 left-6 h-5 w-[13px]" aria-hidden="true">
                  <path d="M1 1v15l3.500-3 2.500 6 3-1-3-6h5z" fill="#fff" stroke="#000" />
                </svg>
              </button>
            </div>
          </div>
          <table className="w-full border-collapse border border-black text-center">
            <thead>
              <tr className="h-[18px]">
                <th className="w-[73px] border border-black">Numéro</th>
                <th className="border border-black">Longueurs</th>
                <th className="w-[170px] border border-black">Chute</th>
              </tr>
            </thead>
            <tbody>
              {cuts.map((c, i) => (
                <tr key={c.n} className="h-[34px] odd:bg-[#d3d3d3]">
                  <td className="border border-black">{c.n}</td>
                  <td className="border border-black align-top">
                    <div className="relative inline-block align-top">
                      {c.tube}
                      <br />
                      {c.pieces}
                      {i === 0 && (
                        <div className="absolute -inset-x-3.5 -top-2 -bottom-1 border-2 border-[#f01010] shadow-[2px_2px_3px_#0006]" />
                      )}
                    </div>
                  </td>
                  <td className="border border-black">{c.waste}</td>
                </tr>
              ))}
            </tbody>
            <tfoot>
              <tr className="h-[22px] font-bold">
                <td colSpan={3} className="border border-black pr-1 align-top">
                  <div className="flex items-center">
                    <span className="flex-1">Quantité = 3, Chute = 1,21</span>
                    <CsvButton label="Exporter l'optimisation" />
                  </div>
                </td>
              </tr>
            </tfoot>
          </table>
        </Section>

        <Section title="Options">
          <div className="pt-0.5 pl-1">
            <CheckRow id="small" label="Choisir d'abord les longueurs les plus petites pour l'optimisation" />
            <CheckRow id="updates" label="Vérifier les mises à jour au démarrage" />
            <CheckRow id="lang" label="Changer la langue vers :">
              <div className="ml-1.5 grid h-[19px] w-[149px]">
                <select
                  aria-label="Langue"
                  defaultValue="Français"
                  className="col-start-1 row-start-1 appearance-none border-2 border-[#777] border-r-[#ccc] border-b-[#ccc] bg-white pl-0.5 font-['Liberation_Sans',Arial,sans-serif] text-[9px] text-black"
                >
                  <option>Français</option>
                </select>
                <svg viewBox="0 0 18 15" className="pointer-events-none col-start-1 row-start-1 mr-0.5 h-[15px] w-[18px] self-center justify-self-end" aria-hidden="true">
                  <path d="M.5.5h17v14H.5z" fill="#f0f0f0" stroke="#888" />
                  <path d="M5 5.500l4 4 4-4" fill="none" stroke="#000" strokeWidth="2" />
                </svg>
              </div>
            </CheckRow>
          </div>
        </Section>
      </aside>
    </div>
  );
}

export default function App() {
  return (
    <div className="grid h-screen grid-cols-[49fr_40fr] overflow-hidden font-['Roboto',sans-serif]">
      <SketchUpWindow />
      <CuttingDialog />
    </div>
  );
}
